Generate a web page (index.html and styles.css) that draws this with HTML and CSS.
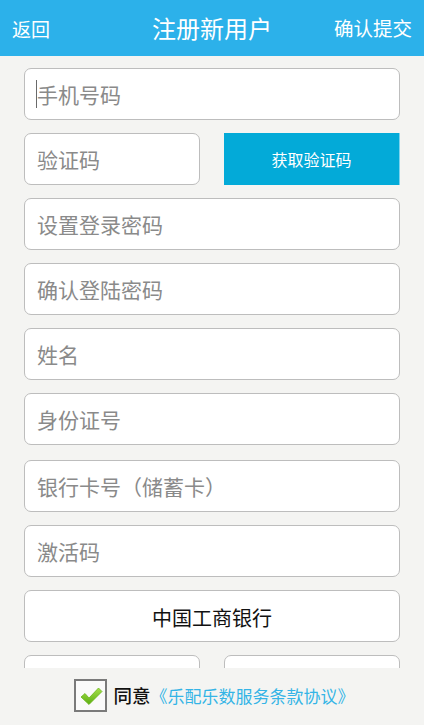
FILE: index.html
```html
<!DOCTYPE html>
<html lang="zh">
<head>
<meta charset="utf-8">
<title>注册新用户</title>
<link rel="stylesheet" href="styles.css">
</head>
<body>
<div class="page">
  <header class="topbar">
    <span class="back">返回</span>
    <span class="title">注册新用户</span>
    <span class="submit">确认提交</span>
  </header>
  <main class="form">
    <div class="field"><span class="cursor"></span><span class="ph">手机号码</span></div>
    <div class="row">
      <div class="field"><span class="ph">验证码</span></div>
      <div class="btn">获取验证码</div>
    </div>
    <div class="field"><span class="ph">设置登录密码</span></div>
    <div class="field"><span class="ph">确认登陆密码</span></div>
    <div class="field"><span class="ph">姓名</span></div>
    <div class="field"><span class="ph">身份证号</span></div>
    <div class="field extra"><span class="ph">银行卡号（储蓄卡）</span></div>
    <div class="field"><span class="ph">激活码</span></div>
    <div class="field select"><span class="val">中国工商银行</span></div>
    <div class="row">
      <div class="field"></div>
      <div class="field"></div>
    </div>
  </main>
  <footer class="agree">
    <span class="check">
      <svg width="26" height="26" viewBox="0 0 26 26"><defs><linearGradient id="g" x1="0" y1="0" x2="0" y2="1"><stop offset="0" stop-color="#a6e04a"/><stop offset="1" stop-color="#5cae12"/></linearGradient></defs><path d="M3 14 L7 10.5 L11 15 L20.5 5 L24 8.5 L11 21.5 Z" fill="url(#g)" stroke="#6bb51c" stroke-width="0.8" stroke-linejoin="round"/></svg>
    </span>
    <span class="agree-text">同意</span>
    <span class="link">《乐配乐数服务条款协议<span class="rb">》</span></span>
  </footer>
</div>
</body>
</html>
```
FILE: styles.css
```css
* { box-sizing: border-box; }
html, body { margin: 0; padding: 0; }
body {
  font-family: "Noto Sans CJK SC", "Noto Sans", sans-serif;
  background: #f4f4f2;
}
.page {
  width: 424px;
  height: 725px;
  display: flex;
  flex-direction: column;
  overflow: hidden;
}
.topbar {
  height: 56px;
  flex: none;
  background: #2cb1ea;
  color: #fff;
  display: flex;
  align-items: center;
  justify-content: space-between;
  padding: 0 12px 0 12px;
  position: relative;
}
.back { font-size: 19px; line-height: 1; }
.submit { font-size: 19.5px; line-height: 1; }
.title {
  font-size: 24px;
  line-height: 1;
  position: absolute;
  left: 0;
  right: 0;
  text-align: center;
  pointer-events: none;
}
.form {
  flex: 1;
  overflow: hidden;
  padding: 12px 24px 0 24px;
  display: flex;
  flex-direction: column;
  gap: 13px;
}
.field {
  flex: none;
  height: 52px;
  background: #fff;
  border: 1px solid #bdbdbd;
  border-radius: 7px;
  display: flex;
  align-items: center;
  padding-left: 12px;
  position: relative;
}
.field.extra { margin-top: 2px; }
.ph { color: #8a8a8a; font-size: 21px; line-height: 1; }
.cursor {
  position: absolute;
  left: 11px;
  top: 11px;
  width: 1px;
  height: 28px;
  background: #6a6a6a;
}
.row {
  flex: none;
  display: grid;
  grid-template-columns: 1fr 1fr;
  gap: 24px;
}
.btn {
  height: 52px;
  background: #03aad8;
  color: #fff;
  font-size: 16px;
  display: flex;
  align-items: center;
  justify-content: center;
  border-right: 1px solid #7fd3ee;
}
.select { justify-content: center; padding-left: 0; }
.val { color: #111; font-size: 20px; line-height: 1; padding-top: 4px; }
.agree {
  height: 57px;
  flex: none;
  background: #f4f4f2;
  display: flex;
  align-items: center;
  justify-content: center;
  padding-bottom: 2px;
}
.check {
  width: 33px;
  height: 33px;
  border: 2px solid #7a7a7a;
  background: #fafafa;
  display: flex;
  align-items: center;
  justify-content: center;
  margin-right: 6px;
}
.agree-text { color: #111; font-size: 18.5px; font-weight: 500; line-height: 1; }
.link { color: #35b4e6; font-size: 17px; line-height: 1; display: flex; }
.rb { margin-right: -5px; }
```
